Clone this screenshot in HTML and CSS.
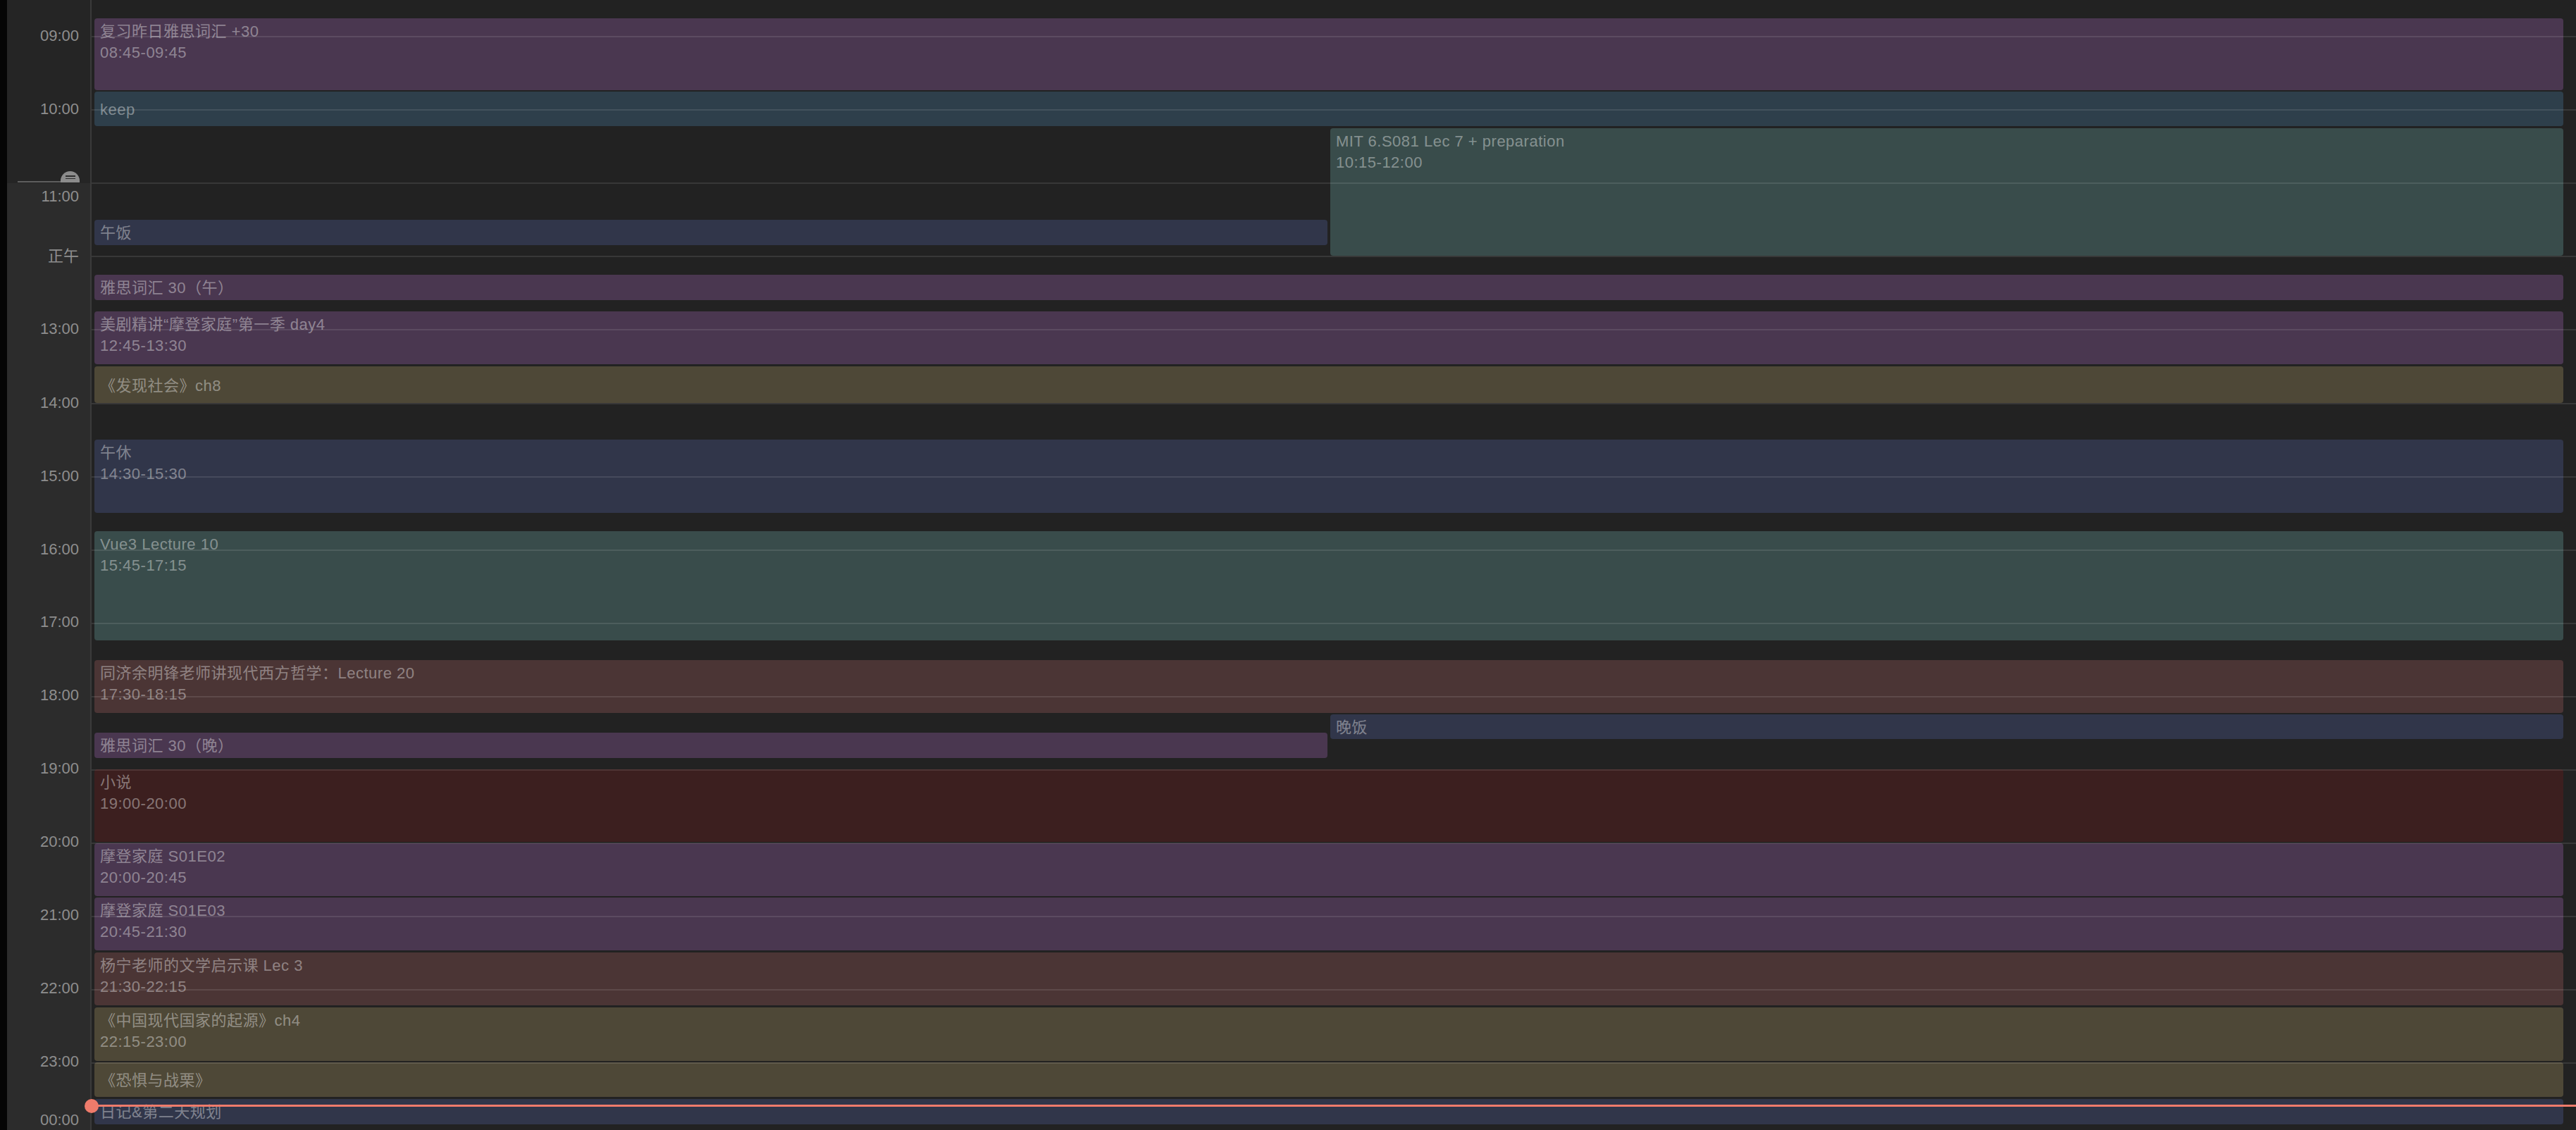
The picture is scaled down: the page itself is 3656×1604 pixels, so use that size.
FILE: index.html
```html
<!DOCTYPE html>
<html lang="zh-CN">
<head>
<meta charset="utf-8">
<title>Day</title>
<link rel="stylesheet" href="styles.css">
</head>
<body>
<div class="app">
  <div class="edge"></div>
  <div class="gutter">
    <div class="gutter-top"></div>
    <div class="gutter-bottom"></div>
    <div class="handle-line"></div>
    <div class="handle"><span class="grip"></span><span class="grip"></span></div>
    <div class="hl" style="top:40px">09:00</div>
    <div class="hl" style="top:144px">10:00</div>
    <div class="hl" style="top:268px">11:00</div>
    <div class="hl" style="top:353px">正午</div>
    <div class="hl" style="top:456px">13:00</div>
    <div class="hl" style="top:561px">14:00</div>
    <div class="hl" style="top:665px">15:00</div>
    <div class="hl" style="top:769px">16:00</div>
    <div class="hl" style="top:872px">17:00</div>
    <div class="hl" style="top:976px">18:00</div>
    <div class="hl" style="top:1080px">19:00</div>
    <div class="hl" style="top:1184px">20:00</div>
    <div class="hl" style="top:1288px">21:00</div>
    <div class="hl" style="top:1392px">22:00</div>
    <div class="hl" style="top:1496px">23:00</div>
    <div class="hl" style="top:1579px">00:00</div>
  </div>
  <div class="day">
    <div class="ev full purple" style="top:26px;height:102px"><div class="t">复习昨日雅思词汇 +30</div><div class="t">08:45-09:45</div></div>
    <div class="ev full steel mid" style="top:130px;height:49px"><div class="t">keep</div></div>
    <div class="ev c2 teal" style="top:182px;height:181px"><div class="t">MIT 6.S081 Lec 7 + preparation</div><div class="t">10:15-12:00</div></div>
    <div class="ev c1 navy" style="top:312px;height:36px"><div class="t">午饭</div></div>
    <div class="ev full purple" style="top:390px;height:36px"><div class="t">雅思词汇 30（午）</div></div>
    <div class="ev full purple" style="top:442px;height:75px"><div class="t">美剧精讲“摩登家庭”第一季 day4</div><div class="t">12:45-13:30</div></div>
    <div class="ev full olive mid-lg" style="top:520px;height:52px"><div class="t">《发现社会》ch8</div></div>
    <div class="ev full navy" style="top:624px;height:104px"><div class="t">午休</div><div class="t">14:30-15:30</div></div>
    <div class="ev full teal" style="top:754px;height:155px"><div class="t">Vue3 Lecture 10</div><div class="t">15:45-17:15</div></div>
    <div class="ev full brown" style="top:937px;height:75px"><div class="t">同济余明锋老师讲现代西方哲学：Lecture 20</div><div class="t">17:30-18:15</div></div>
    <div class="ev c2 navy" style="top:1014px;height:35px"><div class="t">晚饭</div></div>
    <div class="ev c1 purple" style="top:1040px;height:36px"><div class="t">雅思词汇 30（晚）</div></div>
    <div class="ev full wine" style="top:1092px;height:103px"><div class="t">小说</div><div class="t">19:00-20:00</div></div>
    <div class="ev full purple" style="top:1197px;height:75px"><div class="t">摩登家庭 S01E02</div><div class="t">20:00-20:45</div></div>
    <div class="ev full purple" style="top:1274px;height:75px"><div class="t">摩登家庭 S01E03</div><div class="t">20:45-21:30</div></div>
    <div class="ev full brown" style="top:1352px;height:75px"><div class="t">杨宁老师的文学启示课 Lec 3</div><div class="t">21:30-22:15</div></div>
    <div class="ev full olive" style="top:1430px;height:76px"><div class="t">《中国现代国家的起源》ch4</div><div class="t">22:15-23:00</div></div>
    <div class="ev full olive mid" style="top:1508px;height:49px"><div class="t">《恐惧与战栗》</div></div>
    <div class="ev full navy" style="top:1560px;height:36px"><div class="t">日记&amp;第二天规划</div></div>

    <div class="hour-line" style="top:51px"></div>
    <div class="hour-line" style="top:155px"></div>
    <div class="hour-line" style="top:259px"></div>
    <div class="hour-line" style="top:363px"></div>
    <div class="hour-line" style="top:467px"></div>
    <div class="hour-line" style="top:572px"></div>
    <div class="hour-line" style="top:676px"></div>
    <div class="hour-line" style="top:780px"></div>
    <div class="hour-line" style="top:884px"></div>
    <div class="hour-line" style="top:988px"></div>
    <div class="hour-line" style="top:1092px"></div>
    <div class="hour-line" style="top:1196px"></div>
    <div class="hour-line" style="top:1300px"></div>
    <div class="hour-line" style="top:1404px"></div>
    <div class="hour-line" style="top:1508px"></div>

    <div class="now"><span class="now-dot"></span></div>
  </div>
</div>
</body>
</html>
```

FILE: styles.css
```css
html, body {
  margin: 0;
  padding: 0;
  background: #222222;
  overflow: hidden;
}

.app {
  display: flex;
  width: 3656px;
  height: 1604px;
  font-family: "Liberation Sans", "Noto Sans CJK SC", sans-serif;
}

.edge {
  width: 10px;
  flex: none;
  background: #050505;
}

.gutter {
  width: 118px;
  flex: none;
  position: relative;
  display: flex;
  flex-direction: column;
}

.gutter-top {
  height: 260px;
  background: #252525;
}

.gutter-bottom {
  flex: 1;
  background: #2c2c2c;
}

.handle-line {
  position: absolute;
  left: 15px;
  width: 64px;
  top: 257px;
  height: 2px;
  background: #5e5e5e;
}

.handle {
  position: absolute;
  left: 76px;
  top: 243px;
  width: 27px;
  height: 16px;
  border-radius: 13.5px 13.5px 0 0;
  background: #8c8c8c;
  display: flex;
  flex-direction: column;
  align-items: center;
  padding-top: 6px;
  box-sizing: border-box;
  gap: 2px;
}

.grip {
  display: block;
  width: 14px;
  height: 1.5px;
  background: #2e2e2e;
}

.hl {
  position: absolute;
  right: 16px;
  font-size: 22px;
  line-height: 22px;
  color: #8e8e8e;
  white-space: nowrap;
}

.day {
  flex: 1;
  position: relative;
  border-left: 2px solid #3a3a3a;
  background: #222222;
}

.ev {
  position: absolute;
  box-sizing: border-box;
  border-radius: 4px;
  padding: 4px 8px 0;
  overflow: hidden;
  font-size: 22px;
  line-height: 30px;
  letter-spacing: 0.5px;
  color: rgba(255, 255, 255, 0.4);
  white-space: nowrap;
  z-index: 1;
}

.ev.mid {
  padding-top: 11px;
}

.ev.mid-lg {
  padding-top: 13px;
}

.full { left: 4px; right: 18px; }
.c1 { left: 4px; width: 1750px; }
.c2 { left: 1758px; width: 1750px; }

.purple { background: #4a3750; }
.steel  { background: #2e3f4b; }
.teal   { background: #394c4b; }
.navy   { background: #31364a; }
.olive  { background: #4e4837; }
.brown  { background: #4b3535; }
.wine   { background: #3c1f1f; }

.hour-line {
  position: absolute;
  left: 0;
  right: 0;
  height: 2px;
  background: rgba(255, 255, 255, 0.1);
  z-index: 2;
  pointer-events: none;
}

.now {
  position: absolute;
  left: 0;
  right: 0;
  top: 1568px;
  height: 3px;
  background: #ef7b6b;
  z-index: 3;
}

.now-dot {
  position: absolute;
  left: -10px;
  top: -8.5px;
  width: 20px;
  height: 20px;
  border-radius: 50%;
  background: #ef7b6b;
}
```
